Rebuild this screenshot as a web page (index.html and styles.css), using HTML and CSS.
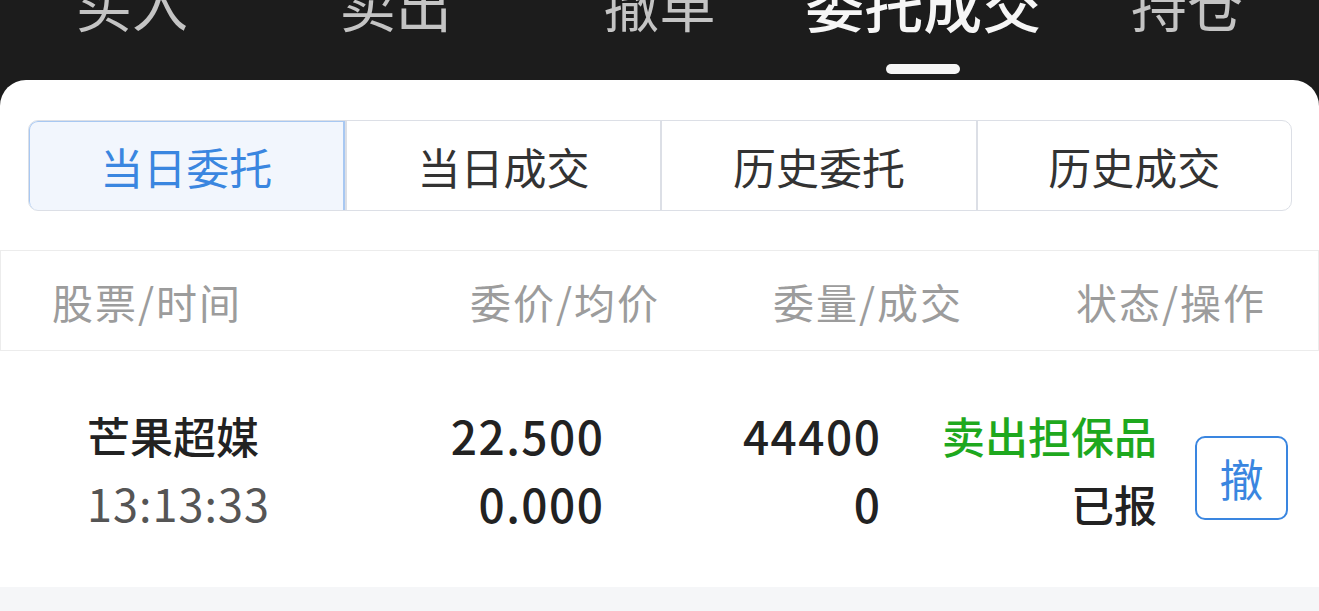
FILE: index.html
```html
<!DOCTYPE html>
<html lang="zh-CN">
<head>
<meta charset="utf-8">
<title>委托成交</title>
<link rel="stylesheet" href="styles.css">
</head>
<body>
<div class="app">
  <nav class="topbar">
    <div class="tab"><span class="tab-label">买入</span></div>
    <div class="tab"><span class="tab-label">卖出</span></div>
    <div class="tab"><span class="tab-label">撤单</span></div>
    <div class="tab active"><span class="tab-label">委托成交</span><span class="indicator"></span></div>
    <div class="tab"><span class="tab-label">持仓</span></div>
  </nav>
  <main class="card">
    <div class="segments">
      <div class="seg active">当日委托</div>
      <div class="seg">当日成交</div>
      <div class="seg">历史委托</div>
      <div class="seg">历史成交</div>
    </div>
    <div class="thead">
      <div class="th left">股票/时间</div>
      <div class="th">委价/均价</div>
      <div class="th">委量/成交</div>
      <div class="th">状态/操作</div>
    </div>
    <div class="row">
      <div class="cell left">
        <div class="name">芒果超媒</div>
        <div class="time">13:13:33</div>
      </div>
      <div class="cell">
        <div class="num">22.500</div>
        <div class="num">0.000</div>
      </div>
      <div class="cell">
        <div class="num">44400</div>
        <div class="num">0</div>
      </div>
      <div class="cell">
        <div class="green">卖出担保品</div>
        <div class="status">已报</div>
      </div>
      <div class="action">
        <button class="cancel">撤</button>
      </div>
    </div>
    <div class="footer-space"></div>
  </main>
</div>
</body>
</html>
```
FILE: styles.css
```css
* { box-sizing: border-box; }
html, body { margin: 0; padding: 0; }
body {
  background: #1c1c1c;
  font-family: "Noto Sans CJK SC", "Noto Sans", sans-serif;
  width: 1319px;
  height: 611px;
  overflow: hidden;
}
.app { display: flex; flex-direction: column; height: 611px; }

.topbar {
  height: 80px;
  display: flex;
  align-items: flex-start;
  background: #1c1c1c;
  flex: none;
}
.tab {
  flex: 1;
  display: flex;
  flex-direction: column;
  align-items: center;
  margin-top: -26px;
}
.tab-label {
  font-size: 56px;
  line-height: 58px;
  color: #c4c4c4;
  white-space: nowrap;
}
.tab.active .tab-label {
  font-size: 59px;
  font-weight: 500;
  color: #f6f6f6;
}
.indicator {
  width: 74px;
  height: 10px;
  border-radius: 5px;
  background: #f5f5f5;
  margin-top: 32px;
}

.card {
  flex: 1;
  background: #fff;
  border-radius: 26px 26px 0 0;
  display: flex;
  flex-direction: column;
  padding-top: 40px;
}

.segments {
  margin: 0 27px 0 28px;
  height: 91px;
  display: flex;
  border: 1.5px solid #dcdfe6;
  border-radius: 10px;
  overflow: hidden;
}
.seg {
  flex: 1;
  display: flex;
  align-items: center;
  justify-content: center;
  font-size: 43px;
  color: #333;
  border-left: 2px solid #dcdfe6;
}
.seg:first-child { border-left: none; }
.seg.active {
  background: #f2f6fd;
  color: #3a86e0;
  border: 2px solid #a8c8f2;
  border-radius: 10px 0 0 10px;
  margin: -1.5px 0 -1.5px -1.5px;
}

.thead {
  margin-top: 39px;
  height: 101px;
  border: 1px solid #ececec;
  display: grid;
  grid-template-columns: repeat(4, 303px);
  padding-left: 51px;
  align-items: center;
}
.th {
  font-size: 41px;
  letter-spacing: 2px;
  color: #9c9c9c;
  text-align: right;
  white-space: nowrap;
}
.th.left { text-align: left; }
.th:not(.left) { margin-right: -2px; }

.row {
  height: 236px;
  background: #fff;
  display: grid;
  grid-template-columns: 239px 277px 277px 277px 1fr;
  padding-left: 87px;
  align-items: center;
}
.cell {
  text-align: right;
  line-height: 68px;
  font-size: 44px;
  color: #222;
  white-space: nowrap;
}
.cell.left { text-align: left; }
.name { font-size: 43px; color: #222; font-weight: 500; }
.time { font-size: 45px; color: #555; letter-spacing: 1px; }
.num { font-size: 46px; color: #222; font-weight: 500; letter-spacing: 1.5px; margin-right: -1.5px; }
.green { font-size: 43px; color: #1ea81e; font-weight: 500; }
.status { font-size: 43px; color: #222; font-weight: 500; }

.action {
  display: flex;
  padding-left: 38px;
  margin-top: 18px;
}
.cancel {
  width: 93px;
  height: 84px;
  border: 2px solid #3a86e0;
  border-radius: 10px;
  background: #fff;
  color: #3a86e0;
  font-family: "Noto Sans CJK SC", sans-serif;
  font-size: 44px;
  padding: 0;
  display: flex;
  align-items: center;
  justify-content: center;
}

.footer-space {
  flex: 1;
  background: #f5f6f8;
}
```
